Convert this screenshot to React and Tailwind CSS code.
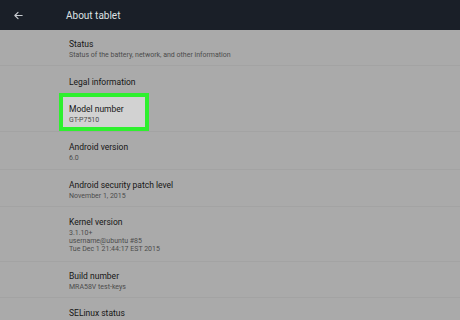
import React from "react";

const rows = [
  { title: "Status", sub: ["Status of the battery, network, and other information"], h: "h-[36px]", pt: "pt-[8px]" },
  { title: "Legal information", sub: [], h: "h-[27px]", pt: "pt-[10px]", noBorder: true },
  { title: "Model number", sub: ["GT-P7510"], h: "h-[39px]", highlight: true },
  { title: "Android version", sub: ["6.0"], h: "h-[38px]", pt: "pt-[9px]" },
  { title: "Android security patch level", sub: ["November 1, 2015"], h: "h-[37px]", pt: "pt-[9px]" },
  { title: "Kernel version", sub: ["3.1.10+", "username@ubuntu #85", "Tue Dec 1 21:44:17 EST 2015"], h: "h-[55px]", pt: "pt-[9px]" },
  { title: "Build number", sub: ["MRA58V test-keys"], h: "h-[36px]", pt: "pt-[8px]" },
  { title: "SELinux status", sub: [], h: "h-[22px]", pt: "pt-[9px]", noBorder: true },
];

const Texts = ({ title, sub }) => (
  <>
    <div className="text-[8.5px] leading-[12px] text-[#161616]">{title}</div>
    {sub.length > 0 && (
      <div className="mt-[1px]">
        {sub.map((s) => (
          <div key={s} className="text-[7px] leading-[8px] text-[#4c4c4c]">{s}</div>
        ))}
      </div>
    )}
  </>
);

export default function App() {
  return (
    <div className="w-[460px] h-[320px] overflow-hidden bg-[#aaaaaa] font-['Roboto',sans-serif]">
      {/* Barra superior */}
      <div className="h-[30px] bg-[#1a1f28] flex items-center">
        <div className="w-[66px] flex pl-[13px]">
          <svg width="11" height="11" viewBox="0 0 24 24" fill="none" stroke="#c9ccd1" strokeWidth="2.4" strokeLinecap="round" strokeLinejoin="round">
            <path d="M20 12H4M11 5l-7 7 7 7" />
          </svg>
        </div>
        <span className="text-[10px] text-[#dfe1e4]">About tablet</span>
      </div>

      {/* Lista */}
      {rows.map((r) => (
        <div
          key={r.title}
          className={`${r.h} ${r.pt || ""} pl-[69px] ${r.noBorder ? "" : "border-b border-[#a3a3a3]"}`}
        >
          {r.highlight ? (
            <div className="ml-[-10px] w-[90px] h-[38px] border-[4px] border-[#2ef02e] bg-[#d2d2d2] pl-[6px] pt-[6px]">
              <Texts title={r.title} sub={r.sub} />
            </div>
          ) : (
            <Texts title={r.title} sub={r.sub} />
          )}
        </div>
      ))}
    </div>
  );
}
